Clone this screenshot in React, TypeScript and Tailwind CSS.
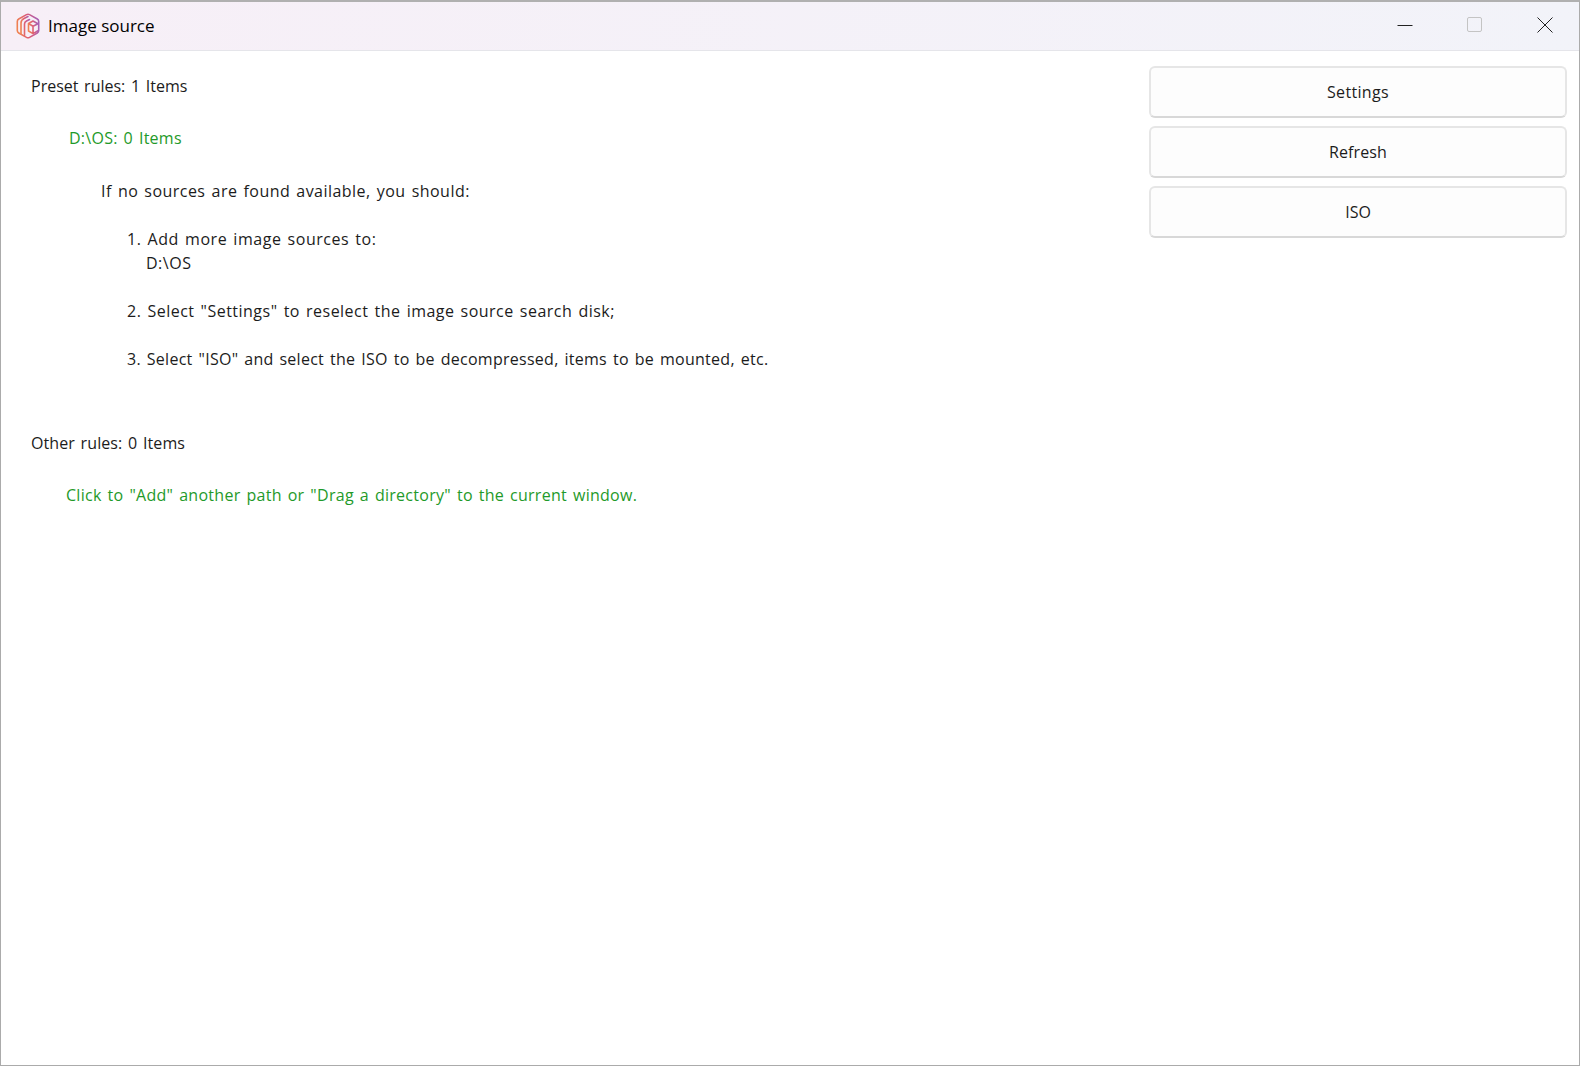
const actions = [
  { label: "Settings", className: "tracking-[0.35px]" },
  { label: "Refresh", className: "tracking-[0.1px]" },
  { label: "ISO", className: "" },
];

const App = () => {
  return (
    <div className="h-[1066px] w-[1580px] flex flex-col bg-white border-x border-b border-[#ababab] border-t-2 border-t-[#b0b0b0] font-['Open_Sans',sans-serif] text-[16px] leading-[24px] text-[#1c1c1c] [word-spacing:1.5px]">
      {/* title bar */}
      <div className="h-[49px] shrink-0 flex items-center border-b border-[#e5e5ea] bg-gradient-to-r from-[#f7eff7] to-[#f2f3f9]">
        <svg className="ml-[15px] w-[24px] h-[26px]" viewBox="0 0 24 26" fill="none" strokeWidth="1.6" strokeLinejoin="round" strokeLinecap="round">
          <defs>
            <linearGradient id="logo" x1="0" y1="0.6" x2="1" y2="0.4">
              <stop offset="0" stopColor="#f08350" />
              <stop offset="0.5" stopColor="#dc5c78" />
              <stop offset="1" stopColor="#a860b4" />
            </linearGradient>
          </defs>
          <path stroke="url(#logo)" d="M10.5 1.6q1.5-.8 3 0l7.8 4.4q1.4.8 1.4 2.4v9.2q0 1.6-1.4 2.4l-7.8 4.4q-1.5.8-3 0l-7.8-4.4q-1.4-.8-1.4-2.4V8.4q0-1.6 1.4-2.4z" />
          <path stroke="url(#logo)" d="M12.5 10.5 17 8l5 2.8M12.5 10.5v7.5l4.5 2.6 5-2.8M17 13.2v7.4M12.5 10.5l4.5 2.7 5-2.4" />
          <path stroke="url(#logo)" d="M5 20.5V10q0-3 3-4.5l4-2M8.5 22.5V11q0-2 2-3l3-1.5" />
        </svg>
        <span className="ml-[8px] text-[17px] text-black [word-spacing:0px]">Image source</span>
        <div className="ml-auto flex items-center pb-[3px]">
          <svg className="w-[16px] h-[16px] text-[#222]" viewBox="0 0 16 16" stroke="currentColor" fill="none">
            <path d="M0.5 8.5h15" />
          </svg>
          <svg className="ml-[54px] w-[15px] h-[15px] text-[#c4c4c4]" viewBox="0 0 15 15" stroke="currentColor" fill="none">
            <rect x="0.5" y="0.5" width="14" height="14" rx="1.5" />
          </svg>
          <svg className="ml-[55px] mr-[26px] w-[16px] h-[16px] text-[#222]" viewBox="0 0 16 16" stroke="currentColor" fill="none">
            <path d="M0.5 0.5 15.5 15.5M15.5 0.5 0.5 15.5" />
          </svg>
        </div>
      </div>

      <div className="flex flex-1 pt-[15px] pr-[12px]">
        {/* rules text */}
        <div className="flex-1 pl-[30px] pt-[8px]">
          <p>Preset rules: 1 Items</p>
          <p className="mt-[28px] ml-[38px] text-[#1f9a2a] tracking-[0.26px]">D:\OS: 0 Items</p>
          <p className="mt-[29px] ml-[70px] tracking-[0.46px]">If no sources are found available, you should:</p>
          <div className="mt-[24px] ml-[96px] flex flex-col gap-[24px]">
            <p className="tracking-[0.53px]">
              1. Add more image sources to:
              <br />
              <span className="ml-[19px] tracking-[0.5px]">D:\OS</span>
            </p>
            <p className="tracking-[0.48px]">2. Select "Settings" to reselect the image source search disk;</p>
            <p className="tracking-[0.27px]">3. Select "ISO" and select the ISO to be decompressed, items to be mounted, etc.</p>
          </div>
          <p className="mt-[60px] tracking-[0.08px]">Other rules: 0 Items</p>
          <p className="mt-[28px] ml-[35px] text-[#1f9a2a] tracking-[0.28px]">Click to "Add" another path or "Drag a directory" to the current window.</p>
        </div>

        {/* actions */}
        <div className="w-[418px] flex flex-col gap-[8px]">
          {actions.map((action) => (
            <button
              key={action.label}
              type="button"
              className={`h-[52px] rounded-[6px] border-2 border-[#e6e6e6] border-b-[#d8d8d8] bg-[#fdfdfd] text-[16px] text-[#1c1c1c] ${action.className}`}
            >
              {action.label}
            </button>
          ))}
        </div>
      </div>
    </div>
  );
};

export default App;
